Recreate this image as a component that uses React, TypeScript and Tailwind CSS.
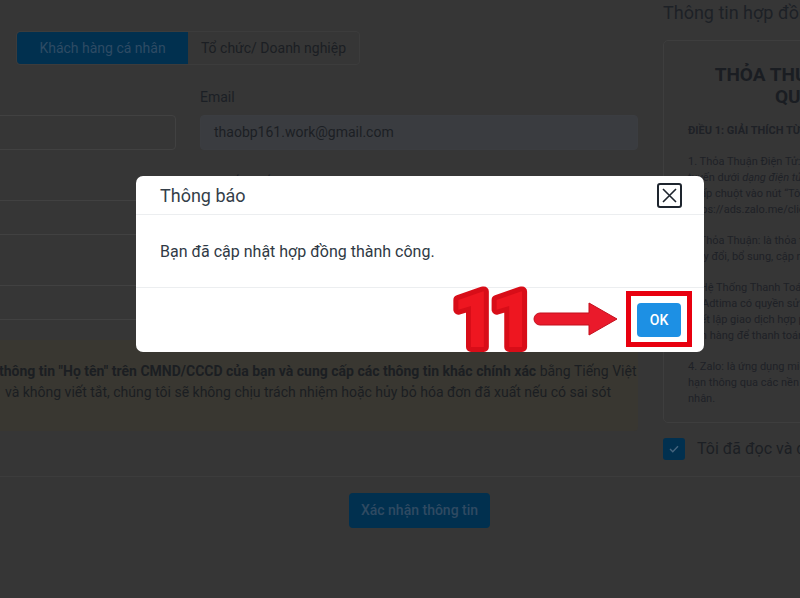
import React from "react";

const para1: React.ReactNode[] = [
  "1. Thỏa Thuận Điện Tử: là thỏa thuận được ký kết trực",
  <>
    tuyến dưới <i>dạng điện tử</i> giữa các bên
  </>,
  "nhấp chuột vào nút “Tôi đồng ý” trên trang",
  "https://ads.zalo.me/client",
];
const para2 = ["2. Thỏa Thuận: là thỏa thuận này và các phụ lục,", "thay đổi, bổ sung, cập nhật"];
const para3 = [
  "3. Hệ Thống Thanh Toán Zalo Ads:",
  "và Adtima có quyền sử dụng",
  "thiết lập giao dịch hợp pháp",
  "đơn hàng để thanh toán",
];
const para4 = ["4. Zalo: là ứng dụng miễn phí", "hạn thông qua các nền tảng", "nhân."];

const Lines = ({ lines }: { lines: React.ReactNode[] }) => (
  <div>
    {lines.map((l, i) => (
      <div key={i} className="whitespace-nowrap">
        {l}
      </div>
    ))}
  </div>
);

// one labelled input of the customer form
const Field = ({ label, value, filled }: { label: string; value?: string; filled?: boolean }) => (
  <div className="flex flex-col gap-[8px]">
    <label className="text-[14px] leading-[20px] text-[#1b1f25]">{label}</label>
    <div
      className={`flex h-[35px] items-center rounded-[4px] border px-[13px] text-[14px] text-[#1c1f24] ${
        filled ? "border-[#3b3d41] bg-[#3a3c40]" : "border-[#414141]"
      }`}
    >
      {value}
    </div>
  </div>
);

const Modal = () => (
  <div className="absolute left-[136px] top-[176px] flex h-[176px] w-[568px] flex-col rounded-[7px] bg-white">
    <div className="flex h-[39px] items-center justify-between border-b border-[#eceef0] pl-[24px] pr-[22px]">
      <span className="text-[18px] text-[#343e49]">Thông báo</span>
      <button className="flex h-[25px] w-[25px] items-center justify-center rounded-[3px] border-2 border-[#1e252e]">
        <svg width="17" height="17" viewBox="0 0 17 17">
          <path d="M2 2 L15 15 M15 2 L2 15" stroke="#1e252e" strokeWidth="1.6" fill="none" />
        </svg>
      </button>
    </div>
    <div className="flex h-[72px] items-center px-[24px] pt-[2px] text-[16px] text-[#2f3944]">
      Bạn đã cập nhật hợp đồng thành công.
    </div>
    <div className="flex flex-1 items-center justify-end border-t border-[#eceef0] pr-[23px]">
      <button className="h-[34px] w-[44px] rounded-[4px] bg-[#1d90e4] text-[14px] font-medium text-white">
        OK
      </button>
    </div>
  </div>
);

// step marker drawn over the dialog
const StepMarker = () => (
  <>
    <svg className="absolute left-[450px] top-[280px]" width="175" height="80" viewBox="0 0 175 80">
      <text
        x="2"
        y="67"
        fontFamily="Roboto, 'DejaVu Sans', sans-serif"
        fontWeight="900"
        fontSize="78"
        letterSpacing="-7"
        fill="#ee1620"
        stroke="#d80d18"
        strokeWidth="10"
        strokeLinejoin="round"
        paintOrder="stroke"
      >
        11
      </text>
      <path
        d="M90 33 H139 V23 L167 39 L139 55 V45 H90 A6 6 0 0 1 90 33 Z"
        fill="#ea1a2b"
        stroke="#c30f1d"
        strokeWidth="1"
        strokeLinejoin="round"
      />
    </svg>
    <div className="absolute left-[626px] top-[291px] h-[56px] w-[66px] border-[5px] border-[#e8000f]" />
  </>
);

export default function App() {
  return (
    <div className="relative h-[598px] w-[800px] overflow-hidden bg-[#363636] font-['Roboto',sans-serif]">
      <div className="ml-[-262px] flex w-[1363px] flex-col">
        <div className="flex gap-[25px]">
          {/* customer form */}
          <section className="w-[900px] pt-[31px]">
            <div className="flex justify-center">
              <div className="flex h-[34px] rounded-[4px] border border-[#3c3c3c] text-[14px]">
                <div className="flex w-[171px] items-center justify-center rounded-l-[4px] bg-[#01304f] text-[#2e4b64]">
                  Khách hàng cá nhân
                </div>
                <div className="flex w-[171px] items-center justify-center text-[#1b1e23]">
                  Tổ chức/ Doanh nghiệp
                </div>
              </div>
            </div>
            <div className="mt-[22px] grid grid-cols-2 gap-x-[24px] gap-y-[22px]">
              <Field label="Họ và tên" />
              <Field label="Email" value="thaobp161.work@gmail.com" filled />
              <Field label="Số điện thoại" />
              <Field label="Mã số thuế" />
              <Field label="CMND/CCCD" />
              <Field label="Địa chỉ" />
            </div>
            <div className="mt-[20px] rounded-[4px] bg-[#393731] pb-[28px] pl-[261px] pt-[21px] text-[14px] leading-[21px] text-[#1b1e22]">
              <div className="whitespace-nowrap">
                <b>thông tin "Họ tên" trên CMND/CCCD của bạn và cung cấp các thông tin khác chính xác</b> bằng Tiếng
                Việt
              </div>
              <div className="ml-[6px] whitespace-nowrap">
                và không viết tắt, chúng tôi sẽ không chịu trách nhiệm hoặc hủy bỏ hóa đơn đã xuất nếu có sai sót
              </div>
            </div>
          </section>

          {/* contract panel */}
          <aside className="w-[438px] pt-[1px]">
            <h2 className="whitespace-nowrap text-[18px] leading-[24px] text-[#1d2126]">Thông tin hợp đồng</h2>
            <div className="mt-[15px] overflow-hidden rounded-[5px] border border-[#3e3e3e] px-[24px] pb-[15px] pt-[23px] text-[11px] leading-[16px] text-[#1e2126]">
              <div className="whitespace-nowrap text-center text-[19px] font-bold leading-[22px] text-[#1a1d22]">
                THỎA THUẬN SỬ DỤNG DỊCH VỤ ZALO
                <br />
                QUẢNG CÁO (ZALO ADS)
              </div>
              <div className="mt-[15px] flex flex-col gap-[15px]">
                <div className="font-bold">ĐIỀU 1: GIẢI THÍCH TỪ NGỮ</div>
                <Lines lines={para1} />
                <Lines lines={para2} />
                <Lines lines={para3} />
                <Lines lines={para4} />
              </div>
            </div>
            <label className="mt-[14px] flex items-center gap-[12px]">
              <span className="flex h-[22px] w-[22px] items-center justify-center rounded-[3px] bg-[#01304f]">
                <svg width="10" height="8" viewBox="0 0 10 8">
                  <path d="M1 4 L3.8 6.8 L9 1.2" stroke="#45647e" strokeWidth="1.4" fill="none" />
                </svg>
              </span>
              <span className="whitespace-nowrap text-[16px] text-[#1c1f24]">Tôi đã đọc và đồng ý với thỏa thuận</span>
            </label>
          </aside>
        </div>

        <div className="mt-[15px] flex justify-center border-t border-[#3c3c3c] pt-[16px]">
          <button className="h-[35px] w-[141px] rounded-[4px] bg-[#01304f] text-[14px] font-medium text-[#2f4a62]">
            Xác nhận thông tin
          </button>
        </div>
      </div>

      <Modal />
      <StepMarker />
    </div>
  );
}
